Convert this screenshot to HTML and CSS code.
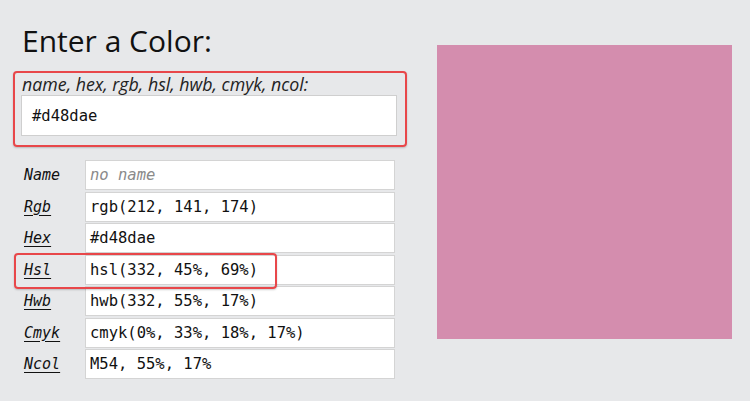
FILE: index.html
```html
<!DOCTYPE html>
<html>
<head>
<meta charset="utf-8">
<link rel="stylesheet" href="styles.css">
</head>
<body>
<div class="page">
  <div class="left">
    <h1 class="title">Enter a Color:</h1>
    <div class="entry">
      <div class="entry-label">name, hex, rgb, hsl, hwb, cmyk, ncol:</div>
      <div class="entry-input">#d48dae</div>
    </div>
    <div class="rows">
      <div class="row"><span class="lbl plain">Name</span><span class="val placeholder">no name</span></div>
      <div class="row"><span class="lbl">Rgb</span><span class="val">rgb(212, 141, 174)</span></div>
      <div class="row"><span class="lbl">Hex</span><span class="val">#d48dae</span></div>
      <div class="row"><span class="lbl">Hsl</span><span class="val">hsl(332, 45%, 69%)</span></div>
      <div class="row"><span class="lbl">Hwb</span><span class="val">hwb(332, 55%, 17%)</span></div>
      <div class="row"><span class="lbl">Cmyk</span><span class="val">cmyk(0%, 33%, 18%, 17%)</span></div>
      <div class="row"><span class="lbl">Ncol</span><span class="val">M54, 55%, 17%</span></div>
      <div class="highlight"></div>
    </div>
  </div>
  <div class="swatch"></div>
</div>
</body>
</html>
```

FILE: styles.css
```css
html, body {
  margin: 0;
  padding: 0;
  background: #e7e8ea;
}
.page {
  display: flex;
  align-items: flex-start;
  padding-left: 13px;
}
.left {
  width: 394px;
}
.title {
  margin: 0;
  padding: 21px 0 0 9px;
  font-family: "Open Sans", sans-serif;
  font-weight: 400;
  font-size: 30px;
  line-height: 40px;
  color: #111;
}
.entry {
  margin-top: 10px;
  border: 2px solid #e8474a;
  border-radius: 4px;
  padding: 1px 8px 9px 6px;
  box-shadow: 0 1px 2px rgba(0,0,0,0.2);
}
.entry-label {
  font-family: "Open Sans", sans-serif;
  font-style: italic;
  font-size: 17.8px;
  line-height: 20px;
  color: #222;
  padding-left: 1px;
}
.entry-input {
  margin-top: 1px;
  height: 39px;
  border: 1px solid #cfcfcf;
  background: #fff;
  padding-left: 10px;
  display: flex;
  align-items: center;
  font-family: "DejaVu Sans Mono", monospace;
  font-size: 15.5px;
  color: #111;
}
.rows {
  position: relative;
  margin-top: 13px;
  padding-left: 11px;
  display: flex;
  flex-direction: column;
  gap: 1.5px;
}
.row {
  display: flex;
  align-items: center;
}
.lbl {
  width: 61px;
  font-family: "DejaVu Sans Mono", monospace;
  font-style: italic;
  font-size: 15px;
  color: #111;
  text-decoration: underline;
  text-underline-offset: 3px;
}
.lbl.plain {
  text-decoration: none;
}
.val {
  width: 304px;
  height: 28px;
  border: 1px solid #d4d4d4;
  background: #fff;
  padding-left: 4px;
  display: flex;
  align-items: center;
  font-family: "DejaVu Sans Mono", monospace;
  font-size: 15.5px;
  color: #111;
}
.val.placeholder {
  color: #8a8a8a;
  font-style: italic;
}
.highlight {
  position: absolute;
  left: 1px;
  top: 93px;
  width: 259px;
  height: 32px;
  border: 2px solid #e8474a;
  border-radius: 4px;
  box-shadow: 0 1px 2px rgba(0,0,0,0.2);
}
.swatch {
  margin-left: 30px;
  margin-top: 45px;
  width: 295px;
  height: 294px;
  background: #d48dae;
}
```
